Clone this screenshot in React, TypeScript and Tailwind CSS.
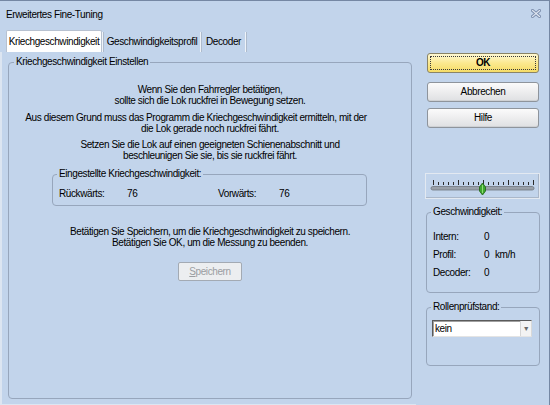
import React from 'react';

function CloseIcon() {
  return (
    <svg width="10" height="9" viewBox="0 0 10 9">
      <path d="M1.5 1.5 L8.5 7.5 M8.5 1.5 L1.5 7.5" stroke="#7d8fae" strokeWidth="3" strokeLinecap="square" />
      <path d="M1.5 1.5 L8.5 7.5 M8.5 1.5 L1.5 7.5" stroke="#e2e8f2" strokeWidth="1.1" strokeLinecap="square" />
    </svg>
  );
}

function Slider() {
  const ticks = Array.from({ length: 21 }, (_, i) => i);
  return (
    <div className="h-[26px] w-[115px] border border-[#e3e9f1] shadow-[inset_-1px_-1px_0_#aab7c9]">
      <svg width="113" height="24" viewBox="0 0 113 24">
        {ticks.map((i) => {
          const x = 7.5 + i * 5;
          const long = i % 5 === 0;
          return <line key={i} x1={x} x2={x} y1={long ? 6 : 8} y2={11} stroke="#2a2a2a" strokeWidth="1" />;
        })}
        <rect x="5" y="12.5" width="103" height="3.5" rx="1.75" fill="#9aa1aa" stroke="#6f767f" strokeWidth="0.8" />
        <path d="M56.5 9 L59.5 13 L59.5 17 L56.5 21 L53.5 17 L53.5 13 Z" fill="#3ea82f" stroke="#276b1c" strokeWidth="0.9" />
        <line x1="56.5" x2="56.5" y1="11" y2="19" stroke="#8fdc74" strokeWidth="1" />
      </svg>
    </div>
  );
}

function Tabs() {
  return (
    <div className="flex h-[22px] items-end pl-[6px]">
      <div className="flex h-[22px] w-[96px] items-center justify-center rounded-t-[2px] border border-b-0 border-[#b7c1d0] bg-white">
        Kriechgeschwindigkeit
      </div>
      <div className="h-[20px] w-[2px] border-l border-r border-l-[#eef3f9] border-r-[#aebbcc]" />
      <div className="flex h-[20px] w-[96px] items-center justify-center">Geschwindigkeitsprofil</div>
      <div className="h-[20px] w-[2px] border-l border-r border-l-[#eef3f9] border-r-[#aebbcc]" />
      <div className="flex h-[20px] w-[43px] items-center justify-center">Decoder</div>
      <div className="h-[20px] w-[2px] border-l border-r border-l-[#eef3f9] border-r-[#aebbcc]" />
    </div>
  );
}

function Button({ children }: { children: React.ReactNode }) {
  return (
    <button
      type="button"
      className="flex h-[20px] w-[112px] items-center justify-center rounded-[3px] border border-[#8e949c] bg-gradient-to-b from-[#fbfbfb] to-[#dfe0e2] shadow-[inset_0_-1px_0_#cfd1d4]"
    >
      {children}
    </button>
  );
}

export default function App() {
  return (
    <div className="flex h-[405px] w-[550px] flex-col border-t border-r border-[#7587a3] bg-[#c2d4eb] font-['Liberation_Sans',Arial,sans-serif] text-[10px] leading-[12px] tracking-[-0.4px] text-black">
      <div className="flex h-[29px] items-start justify-between pl-[6px] pr-[8px] pt-[8px]">
        <span>Erweitertes Fine-Tuning</span>
        <CloseIcon />
      </div>

      <div className="flex flex-1">
        <div className="flex w-[416px] flex-col">
          <Tabs />
          <div className="flex-1 border-b border-l-2 border-[#dce5f1] pl-[6px] pt-[4px]">
            <fieldset className="h-[343px] w-[404px] rounded-[4px] border border-[#97a6bc]">
              <legend className="ml-[5px] px-[2px]">Kriechgeschwindigkeit Einstellen</legend>

              <div className="mt-[16px] text-center leading-[11px]">
                <p>Wenn Sie den Fahrregler betätigen,</p>
                <p>sollte sich die Lok ruckfrei in Bewegung setzen.</p>
              </div>
              <div className="mt-[6px] text-center leading-[11px]">
                <p className="pr-[28px]">Aus diesem Grund muss das Programm die Kriechgeschwindigkeit ermitteln, mit der</p>
                <p>die Lok gerade noch ruckfrei fährt.</p>
              </div>
              <div className="mt-[5px] text-center leading-[11px]">
                <p>Setzen Sie die Lok auf einen geeigneten Schienenabschnitt und</p>
                <p>beschleunigen Sie sie, bis sie ruckfrei fährt.</p>
              </div>

              <fieldset className="ml-[43px] mt-[7px] w-[315px] rounded-[4px] border border-[#97a6bc] pb-[5px]">
                <legend className="ml-[4px] px-[2px]">Eingestellte Kriechgeschwindigkeit:</legend>
                <div className="mt-[8px] flex pl-[6px]">
                  <span className="w-[68px]">Rückwärts:</span>
                  <span className="w-[91px]">76</span>
                  <span className="w-[61px]">Vorwärts:</span>
                  <span>76</span>
                </div>
              </fieldset>

              <div className="mt-[20px] text-center leading-[11px]">
                <p>Betätigen Sie Speichern, um die Kriechgeschwindigkeit zu speichern.</p>
                <p>Betätigen Sie OK, um die Messung zu beenden.</p>
              </div>

              <div className="mt-[14px] flex justify-center">
                <button
                  type="button"
                  disabled
                  className="flex h-[19px] w-[64px] items-center justify-center rounded-[2px] border border-[#a3aab3] bg-[#eceef0] text-[#9a9da1]"
                >
                  <span>
                    <span className="underline">S</span>peichern
                  </span>
                </button>
              </div>
            </fieldset>
          </div>
        </div>

        <div className="flex flex-1 flex-col pl-[9px]">
          <button
            type="button"
            className="ml-[2px] mt-[23px] flex h-[20px] w-[112px] items-center justify-center rounded-[3px] border border-[#8a8466] bg-gradient-to-b from-[#fff8d2] via-[#fbe98f] to-[#f6dc66] p-[2px]"
          >
            <span className="flex h-full w-full items-center justify-center border border-dotted border-[#3a3a3a] font-bold">
              OK
            </span>
          </button>
          <div className="ml-[2px] mt-[9px]">
            <Button>Abbrechen</Button>
          </div>
          <div className="ml-[2px] mt-[6px]">
            <Button>Hilfe</Button>
          </div>

          <div className="mt-[45px]">
            <Slider />
          </div>

          <fieldset className="ml-[1px] mt-[7px] h-[87px] w-[114px] rounded-[4px] border border-[#97a6bc]">
            <legend className="ml-[4px] px-[2px]">Geschwindigkeit:</legend>
            <div className="mt-[10px] flex flex-col pl-[6px]">
              <div className="flex h-[18px] items-center">
                <span className="w-[51px]">Intern:</span>
                <span>0</span>
              </div>
              <div className="flex h-[18px] items-center">
                <span className="w-[51px]">Profil:</span>
                <span className="w-[11px]">0</span>
                <span>km/h</span>
              </div>
              <div className="flex h-[18px] items-center">
                <span className="w-[51px]">Decoder:</span>
                <span>0</span>
              </div>
            </div>
          </fieldset>

          <fieldset className="ml-[1px] mt-[8px] h-[65px] w-[114px] rounded-[4px] border border-[#97a6bc]">
            <legend className="ml-[4px] px-[2px]">Rollenprüfstand:</legend>
            <div className="ml-[5px] mt-[7px] flex h-[17px] w-[100px] border border-b-[#e4e4e4] border-l-[#5a5a5a] border-r-[#d8d8d8] border-t-[#5a5a5a] bg-white shadow-[inset_1px_1px_0_#a0a0a0]">
              <span className="flex-1 pl-[2px] leading-[15px]">kein</span>
              <span className="flex w-[11px] items-center justify-center border-l border-[#d6d6d6] bg-[#f3f3f3] text-[7px] text-[#6a6a6a]">
                ▼
              </span>
            </div>
          </fieldset>
        </div>
      </div>
    </div>
  );
}
